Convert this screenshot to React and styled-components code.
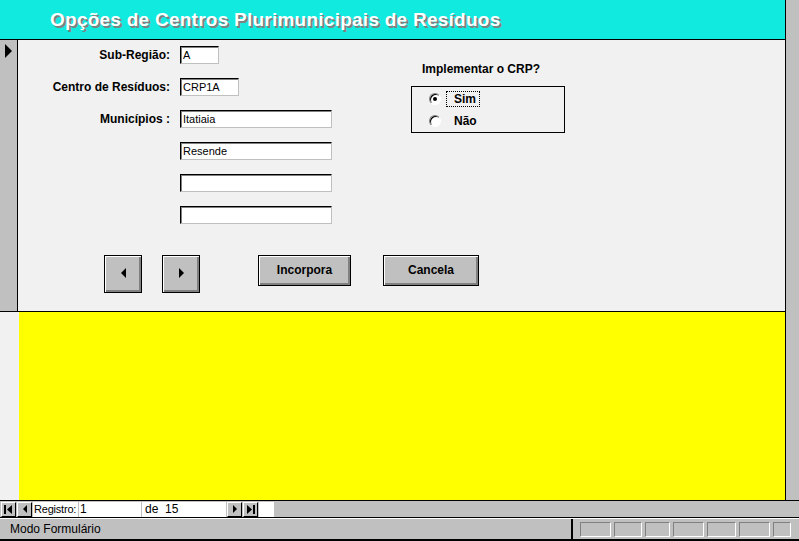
import React from 'react'
import styled, { createGlobalStyle } from 'styled-components'

const GlobalStyle = createGlobalStyle`
  html, body {
    margin: 0;
    padding: 0;
    background: #c0c0c0;
    overflow: hidden;
  }
  body {
    font-family: 'Liberation Sans', Arial, sans-serif;
  }
`

const Window = styled.div`
  width: 799px;
  height: 541px;
  display: flex;
  flex-direction: column;
  background: #c0c0c0;
  overflow: hidden;
`

const Main = styled.div`
  display: flex;
  height: 500px;
`

const FormArea = styled.div`
  flex: 1;
  display: flex;
  flex-direction: column;
  border-right: 1px solid #000;
`

const ScrollStrip = styled.div`
  width: 13px;
  background: #c0c0c0;
`

const Header = styled.div`
  height: 40px;
  border-bottom: 1px solid #000;
  background: #11eadf;
  display: flex;
  align-items: center;
  padding-left: 50px;
  box-sizing: border-box;
`

const Title = styled.h1`
  margin: 0;
  font-family: 'Liberation Sans', Arial, sans-serif;
  font-weight: bold;
  font-size: 19px;
  color: #fff;
  text-shadow: 2px 2px 0 #808080;
  letter-spacing: 0.25px;
`

const Detail = styled.div`
  height: 272px;
  display: flex;
  border-bottom: 1px solid #000;
  box-sizing: border-box;
`

const Selector = styled.div`
  width: 18px;
  background: #c0c0c0;
  border-right: 1px solid #000;
  padding-top: 4px;
  box-sizing: border-box;
  display: flex;
  justify-content: center;
  align-items: flex-start;
`

const Content = styled.div`
  flex: 1;
  background: #f1f1f1;
  display: flex;
  flex-direction: column;
`

const TopRow = styled.div`
  display: flex;
`

const FieldGrid = styled.div`
  display: grid;
  grid-template-columns: 152px auto;
  column-gap: 10px;
  row-gap: 14px;
  padding-top: 6px;
  align-items: center;
`

const Label = styled.label`
  grid-column: 1;
  text-align: right;
  font-weight: bold;
  font-size: 12px;
  color: #000;
`

const Field = styled.div`
  grid-column: 2;
  width: ${p => p.$w}px;
  height: 18px;
  box-sizing: border-box;
  background: #fff;
  border-top: 1px solid #000;
  border-left: 1px solid #000;
  border-right: 1px solid #c0c0c0;
  border-bottom: 1px solid #c0c0c0;
  box-shadow: inset 1px 1px 0 #808080;
  font-size: 11px;
  line-height: 16px;
  padding-left: 2px;
  color: #000;
`

const OptionPanel = styled.div`
  margin-left: 79px;
  padding-top: 22px;
  display: flex;
  flex-direction: column;
`

const Question = styled.div`
  font-weight: bold;
  font-size: 12px;
  padding-left: 11px;
  height: 15px;
`

const OptionGroup = styled.div`
  margin-top: 9px;
  width: 154px;
  height: 47px;
  box-sizing: border-box;
  border: 1px solid #000;
  display: flex;
  flex-direction: column;
  padding: 4px 0 0 17px;
  gap: 6px;
`

const Option = styled.div`
  display: flex;
  align-items: center;
  height: 16px;
`

const Radio = styled.span`
  width: 12px;
  height: 12px;
  box-sizing: border-box;
  border-radius: 50%;
  background: #fff;
  border: 1px solid;
  border-color: #808080 #fff #fff #808080;
  box-shadow: inset 1px 1px 0 #000;
  display: flex;
  align-items: center;
  justify-content: center;
  &::after {
    content: '';
    width: 4px;
    height: 4px;
    border-radius: 50%;
    background: ${p => (p.$checked ? '#000' : 'transparent')};
  }
`

const OptionText = styled.span`
  margin-left: 5px;
  padding: 0 3px 0 7px;
  font-weight: bold;
  font-size: 12px;
  height: 14px;
  line-height: 14px;
  border: 1px dotted ${p => (p.$focus ? '#000' : 'transparent')};
`

const ButtonRow = styled.div`
  display: flex;
  align-items: flex-start;
  padding-left: 86px;
  margin-top: 31px;
`

const Button = styled.button`
  width: ${p => p.$w}px;
  height: ${p => p.$h}px;
  margin-left: ${p => p.$gap || 0}px;
  box-sizing: border-box;
  background: #c0c0c0;
  border: 1px solid #000;
  box-shadow: inset 1px 1px 0 #fff, inset -1px -1px 0 #808080, inset -2px -2px 0 #808080;
  font-family: 'Liberation Sans', Arial, sans-serif;
  font-weight: bold;
  font-size: 12px;
  color: #000;
  display: flex;
  align-items: center;
  justify-content: center;
  padding: 0 0 2px 0;
`

const Footer = styled.div`
  flex: 1;
  display: flex;
`

const FooterGap = styled.div`
  width: 19px;
  background: #f1f1f1;
`

const FooterBody = styled.div`
  flex: 1;
  background: #ffff00;
`

const NavBar = styled.div`
  height: 18px;
  display: flex;
  align-items: center;
  border-top: 1px solid #000;
  border-bottom: 1px solid #000;
  padding-left: 1px;
  gap: 1px;
  box-sizing: border-box;
  background: #c0c0c0;
`

const NavButton = styled.div`
  width: 15px;
  height: 15px;
  box-sizing: border-box;
  background: #c0c0c0;
  border: 1px solid;
  border-color: #fff #000 #000 #fff;
  display: flex;
  align-items: center;
  justify-content: center;
`

const NavBox = styled.div`
  width: ${p => p.$w}px;
  height: 15px;
  background: #fff;
  font-size: ${p => p.$size || 12}px;
  letter-spacing: ${p => p.$tight ? '-0.2px' : 'normal'};
  line-height: 15px;
  padding-left: ${p => p.$pad ?? 1}px;
  box-sizing: border-box;
  color: #000;
  white-space: nowrap;
`

const StatusBar = styled.div`
  flex: 1;
  display: flex;
  align-items: center;
  border-top: 1px solid #fff;
  border-bottom: 2px solid #000;
`

const StatusText = styled.div`
  flex: 1;
  font-size: 12px;
  padding-left: 10px;
  color: #000;
`

const Panels = styled.div`
  display: flex;
  gap: 3px;
  padding: 0 8px 0 7px;
  border-left: 2px solid #000;
  height: 100%;
  align-items: center;
  box-sizing: border-box;
`

const Panel = styled.div`
  width: ${p => p.$w}px;
  height: 15px;
  box-sizing: border-box;
  border: 1px solid;
  border-color: #808080 #fff #fff #808080;
`

const Triangle = ({ dir = 'right', size = 5 }) => {
  const pts = dir === 'right'
    ? `0,0 ${size},${size} 0,${size * 2}`
    : `${size},0 0,${size} ${size},${size * 2}`
  return (
    <svg width={size} height={size * 2} viewBox={`0 0 ${size} ${size * 2}`}>
      <polygon points={pts} fill="#000" />
    </svg>
  )
}

const EdgeIcon = ({ dir }) => (
  <svg width="9" height="9" viewBox="0 0 9 9">
    {dir === 'left' ? (
      <>
        <rect x="0" y="0" width="2" height="9" fill="#000" />
        <polygon points="8,0 3,4.5 8,9" fill="#000" />
      </>
    ) : (
      <>
        <polygon points="1,0 6,4.5 1,9" fill="#000" />
        <rect x="7" y="0" width="2" height="9" fill="#000" />
      </>
    )}
  </svg>
)

const municipios = ['Itatiaia', 'Resende', '', '']
const panelWidths = [31, 28, 25, 31, 29, 31, 18]

const App = () => (
  <Window>
    <GlobalStyle />
    <Main>
      <FormArea>
        <Header>
          <Title>Opções de Centros Plurimunicipais de Resíduos</Title>
        </Header>
        <Detail>
          <Selector>
            <Triangle dir="right" size={7} />
          </Selector>
          <Content>
            <TopRow>
              <FieldGrid>
                <Label>Sub-Região:</Label>
                <Field $w={39}>A</Field>
                <Label>Centro de Resíduos:</Label>
                <Field $w={59}>CRP1A</Field>
                {municipios.map((m, i) => (
                  <React.Fragment key={i}>
                    {i === 0 ? <Label>Municípios :</Label> : <span />}
                    <Field $w={152}>{m}</Field>
                  </React.Fragment>
                ))}
              </FieldGrid>
              <OptionPanel>
                <Question>Implementar o CRP?</Question>
                <OptionGroup>
                  <Option>
                    <Radio $checked />
                    <OptionText $focus>Sim</OptionText>
                  </Option>
                  <Option>
                    <Radio />
                    <OptionText>Não</OptionText>
                  </Option>
                </OptionGroup>
              </OptionPanel>
            </TopRow>
            <ButtonRow>
              <Button $w={38} $h={38}><Triangle dir="left" size={5} /></Button>
              <Button $w={38} $h={38} $gap={20}><Triangle dir="right" size={5} /></Button>
              <Button $w={93} $h={31} $gap={58}>Incorpora</Button>
              <Button $w={96} $h={31} $gap={32}>Cancela</Button>
            </ButtonRow>
          </Content>
        </Detail>
        <Footer>
          <FooterGap />
          <FooterBody />
        </Footer>
      </FormArea>
      <ScrollStrip />
    </Main>
    <NavBar>
      <NavButton><EdgeIcon dir="left" /></NavButton>
      <NavButton><Triangle dir="left" size={4} /></NavButton>
      <NavBox $w={45} $size={11} $pad={1} $tight>Registro:</NavBox>
      <NavBox $w={62}>1</NavBox>
      <NavBox $w={84} $pad={3}>de &nbsp;15</NavBox>
      <NavButton><Triangle dir="right" size={4} /></NavButton>
      <NavButton><EdgeIcon dir="right" /></NavButton>
      <NavBox $w={15} />
    </NavBar>
    <StatusBar>
      <StatusText>Modo Formulário</StatusText>
      <Panels>
        {panelWidths.map((w, i) => <Panel key={i} $w={w} />)}
      </Panels>
    </StatusBar>
  </Window>
)

export default App
